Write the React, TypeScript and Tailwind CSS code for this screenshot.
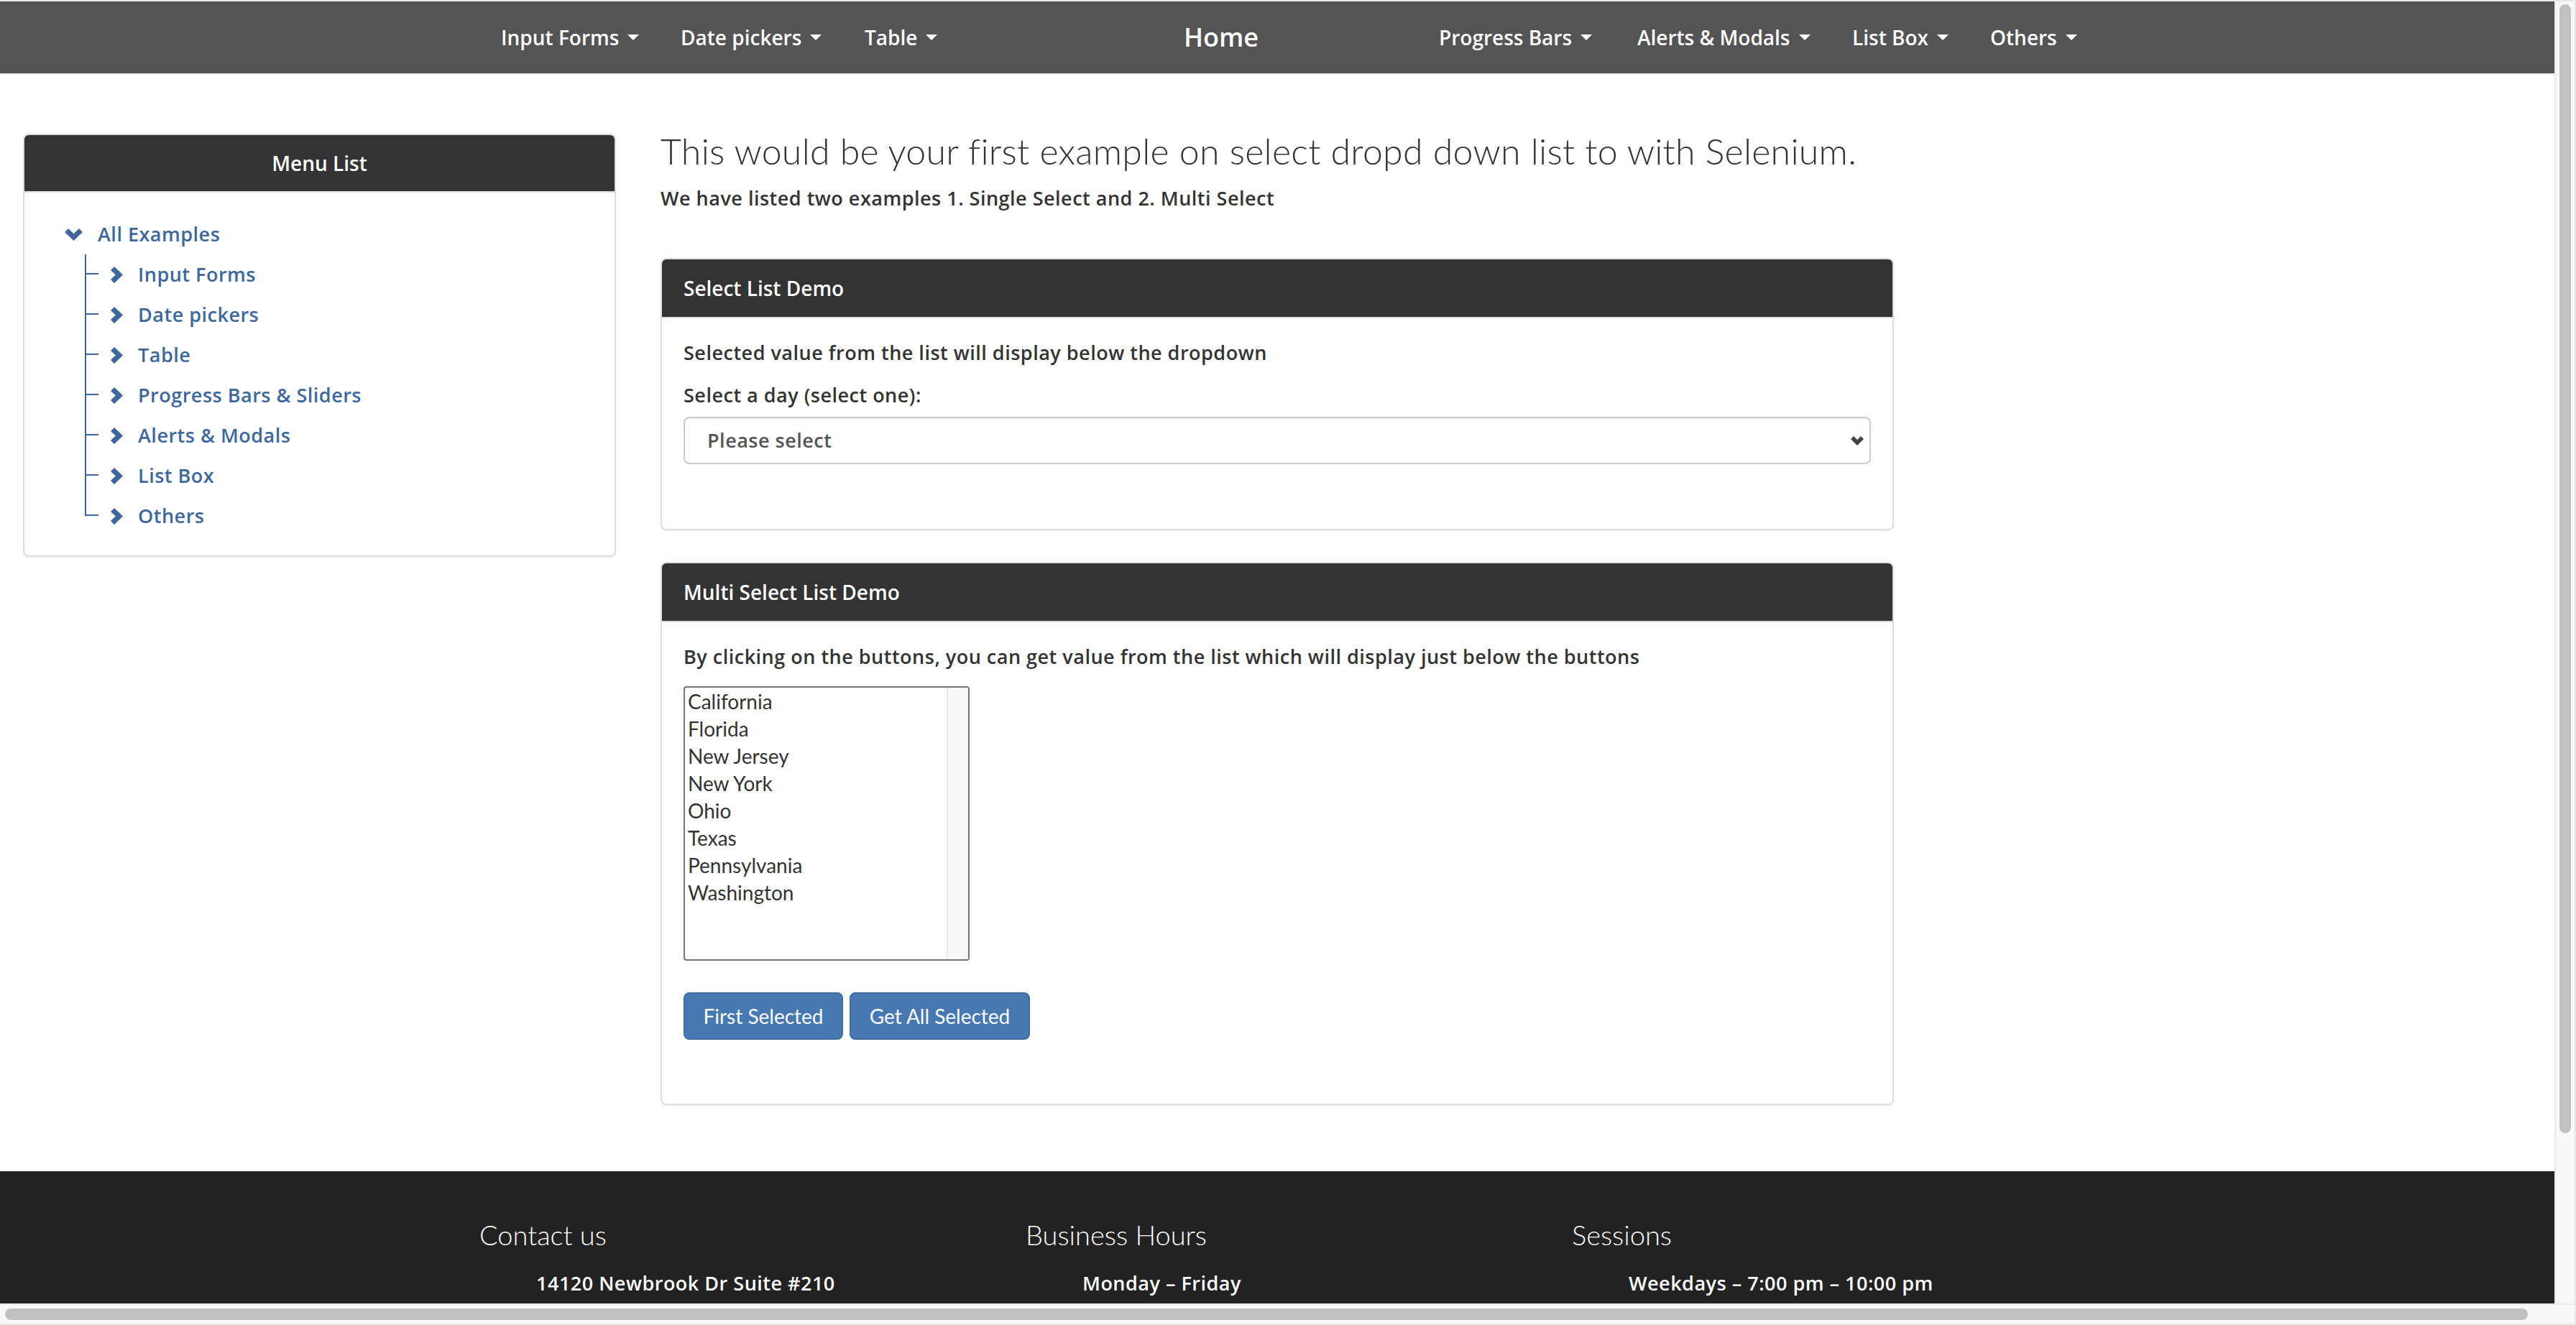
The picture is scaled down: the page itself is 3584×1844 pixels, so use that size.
import React from "react";

const sideLinks = [
  "Input Forms",
  "Date pickers",
  "Table",
  "Progress Bars & Sliders",
  "Alerts & Modals",
  "List Box",
  "Others",
];

const states = [
  "California",
  "Florida",
  "New Jersey",
  "New York",
  "Ohio",
  "Texas",
  "Pennsylvania",
  "Washington",
];

// semibold text uses Open Sans, its widths sit closest to the original face
const strong = "font-['Open_Sans',sans-serif] font-semibold";
const body = "text-[27px] tracking-[0.5px]";

function Caret() {
  return (
    <span className="ml-[12px] inline-block w-0 h-0 border-t-[8px] border-x-[8px] border-t-white border-x-transparent" />
  );
}

function NavItem({ label, width }: { label: string; width: string }) {
  return (
    <div className={`flex items-center text-[28px] ${strong} ${width}`}>
      {label}
      <Caret />
    </div>
  );
}

function ChevronRight() {
  return (
    <svg width="17" height="23" viewBox="0 0 17 23" className="shrink-0">
      <polygon points="0,5 5,0 17,11.5 5,23 0,18 6.8,11.5" fill="#3e689b" />
    </svg>
  );
}

function ChevronDown() {
  return (
    <svg width="25" height="17" viewBox="0 0 25 17" className="shrink-0">
      <polygon points="0,5 5,0 12.5,7.3 20,0 25,5 12.5,17" fill="#3e689b" />
    </svg>
  );
}

function Panel({ title, children }: { title: string; children: React.ReactNode }) {
  return (
    <div className="border-2 border-[#dddddd] rounded-[8px] overflow-hidden shadow-[0_2px_2px_rgba(0,0,0,0.05)]">
      <div className={`h-[82px] bg-[#333333] border-b-2 border-[#dddddd] flex items-center px-[30px] text-white text-[28px] ${strong}`}>
        {title}
      </div>
      {children}
    </div>
  );
}

export default function App() {
  return (
    <div className="w-[3584px] h-[1844px] flex flex-col overflow-hidden bg-white border-t-2 border-r-2 border-b-2 border-[#e6e6e6] font-['Lato',sans-serif] text-[#333333]">
      <div className="flex h-[1812px]">
        {/* Page */}
        <div className="w-[3554px] flex flex-col overflow-hidden">
          {/* Navbar */}
          <nav className="h-[102px] shrink-0 bg-[#545454] border-b-2 border-[#e7e7e7] flex items-center pl-[697px] text-white">
            <NavItem label="Input Forms" width="w-[250px]" />
            <NavItem label="Date pickers" width="w-[256px]" />
            <NavItem label="Table" width="w-[444px]" />
            <div className={`w-[355px] text-[36px] ${strong}`}>Home</div>
            <NavItem label="Progress Bars" width="w-[276px]" />
            <NavItem label="Alerts & Modals" width="w-[299px]" />
            <NavItem label="List Box" width="w-[192px]" />
            <NavItem label="Others" width="w-[200px]" />
          </nav>

          {/* Body */}
          <div className="flex items-start pl-[32px] shrink-0">
            {/* Sidebar */}
            <div className="w-[825px] mt-[82px] border-2 border-[#dddddd] rounded-[8px] overflow-hidden shadow-[0_2px_2px_rgba(0,0,0,0.05)]">
              <div className={`h-[80px] bg-[#333333] border-b-2 border-[#dddddd] flex items-center justify-center text-white text-[28px] ${strong}`}>
                Menu List
              </div>
              <div className={`pt-[30px] pb-[27px] text-[#3e689b] ${body} ${strong}`}>
                <div className="h-[56px] flex items-center pl-[56px]">
                  <ChevronDown />
                  <span className="ml-[21px]">All Examples</span>
                </div>
                <div className="pl-[84px]">
                  {sideLinks.map((link, i) => (
                    <div key={link} className="h-[56px] flex items-center">
                      <div className="self-stretch w-[19px] flex flex-col">
                        <div className="h-[28px] border-l-2 border-b-2 border-[#3e689b]" />
                        {i < sideLinks.length - 1 && <div className="flex-1 border-l-2 border-[#3e689b]" />}
                      </div>
                      <div className="ml-[17px]">
                        <ChevronRight />
                      </div>
                      <span className="ml-[21px]">{link}</span>
                    </div>
                  ))}
                </div>
              </div>
            </div>

            {/* Main column */}
            <div className="ml-[62px] w-[1716px] pt-[77px] pb-[92px]">
              <h3 className="text-[50px] leading-[58px] tracking-[0.3px] font-light">
                This would be your first example on select dropd down list to with Selenium.
              </h3>
              <p className={`mt-[19px] leading-[36px] ${body} ${strong}`}>
                We have listed two examples 1. Single Select and 2. Multi Select
              </p>

              <div className="mt-[65px]">
                <Panel title="Select List Demo">
                  <div className={`px-[30px] pt-[28px] pb-[90px] ${body} ${strong}`}>
                    <p className="leading-[40px]">Selected value from the list will display below the dropdown</p>
                    <p className="mt-[19px] leading-[40px]">Select a day (select one):</p>
                    <div className="mt-[10px] h-[66px] border-2 border-[#cccccc] rounded-[8px] flex items-center justify-between pl-[31px] pr-[8px] text-[#555555] shadow-[inset_0_2px_2px_rgba(0,0,0,0.06)]">
                      <span>Please select</span>
                      <svg width="18" height="13" viewBox="0 0 18 13">
                        <polygon points="0,4 4,0 9,5 14,0 18,4 9,13" fill="#444444" />
                      </svg>
                    </div>
                  </div>
                </Panel>
              </div>

              <div className="mt-[44px]">
                <Panel title="Multi Select List Demo">
                  <div className="px-[30px] pt-[28px] pb-[89px]">
                    <p className={`leading-[40px] ${body} ${strong}`}>
                      By clicking on the buttons, you can get value from the list which will display just below the buttons
                    </p>
                    <div className="mt-[21px] w-[398px] h-[382px] border-2 border-[#767676] rounded-[4px] flex">
                      <div className="flex-1 pl-[4px] text-[28px] text-[#333333]">
                        {states.map((s) => (
                          <div key={s} className="h-[38px] leading-[38px]">
                            {s}
                          </div>
                        ))}
                      </div>
                      <div className="w-[30px] bg-[#f8f8f8] border-l-2 border-[#ececec]" />
                    </div>
                    <div className="mt-[44px] flex gap-[9px]">
                      <button className="w-[222px] h-[66px] rounded-[8px] bg-[#4678b2] border-2 border-[#3f6ea5] text-white text-[28px]">
                        First Selected
                      </button>
                      <button className="w-[251px] h-[66px] rounded-[8px] bg-[#4678b2] border-2 border-[#3f6ea5] text-white text-[28px]">
                        Get All Selected
                      </button>
                    </div>
                  </div>
                </Panel>
              </div>
            </div>
          </div>

          {/* Footer */}
          <footer className="flex-1 bg-[#222222] pt-[65px] pl-[667px] text-white">
            <div className="grid grid-cols-[760px_760px_760px]">
              {[
                ["Contact us", "14120 Newbrook Dr Suite #210"],
                ["Business Hours", "Monday – Friday"],
                ["Sessions", "Weekdays – 7:00 pm – 10:00 pm"],
              ].map(([head, line]) => (
                <div key={head}>
                  <h4 className="text-[38px] leading-[46px] font-light">{head}</h4>
                  <p className={`mt-[27px] pl-[79px] leading-[36px] ${body} ${strong}`}>{line}</p>
                </div>
              ))}
            </div>
          </footer>
        </div>

        {/* Vertical scrollbar */}
        <div className="w-[28px] border-l-2 border-[#ebebeb] bg-[#f8f8f8] flex justify-center">
          <div className="mt-[4px] w-[16px] h-[1571px] rounded-full bg-[#c1c1c1]" />
        </div>
      </div>

      {/* Horizontal scrollbar */}
      <div className="h-[28px] border-t-2 border-[#ebebeb] bg-[#f8f8f8] flex items-center pl-[7px]">
        <div className="w-[3510px] h-[16px] rounded-full bg-[#c1c1c1]" />
      </div>
    </div>
  );
}
